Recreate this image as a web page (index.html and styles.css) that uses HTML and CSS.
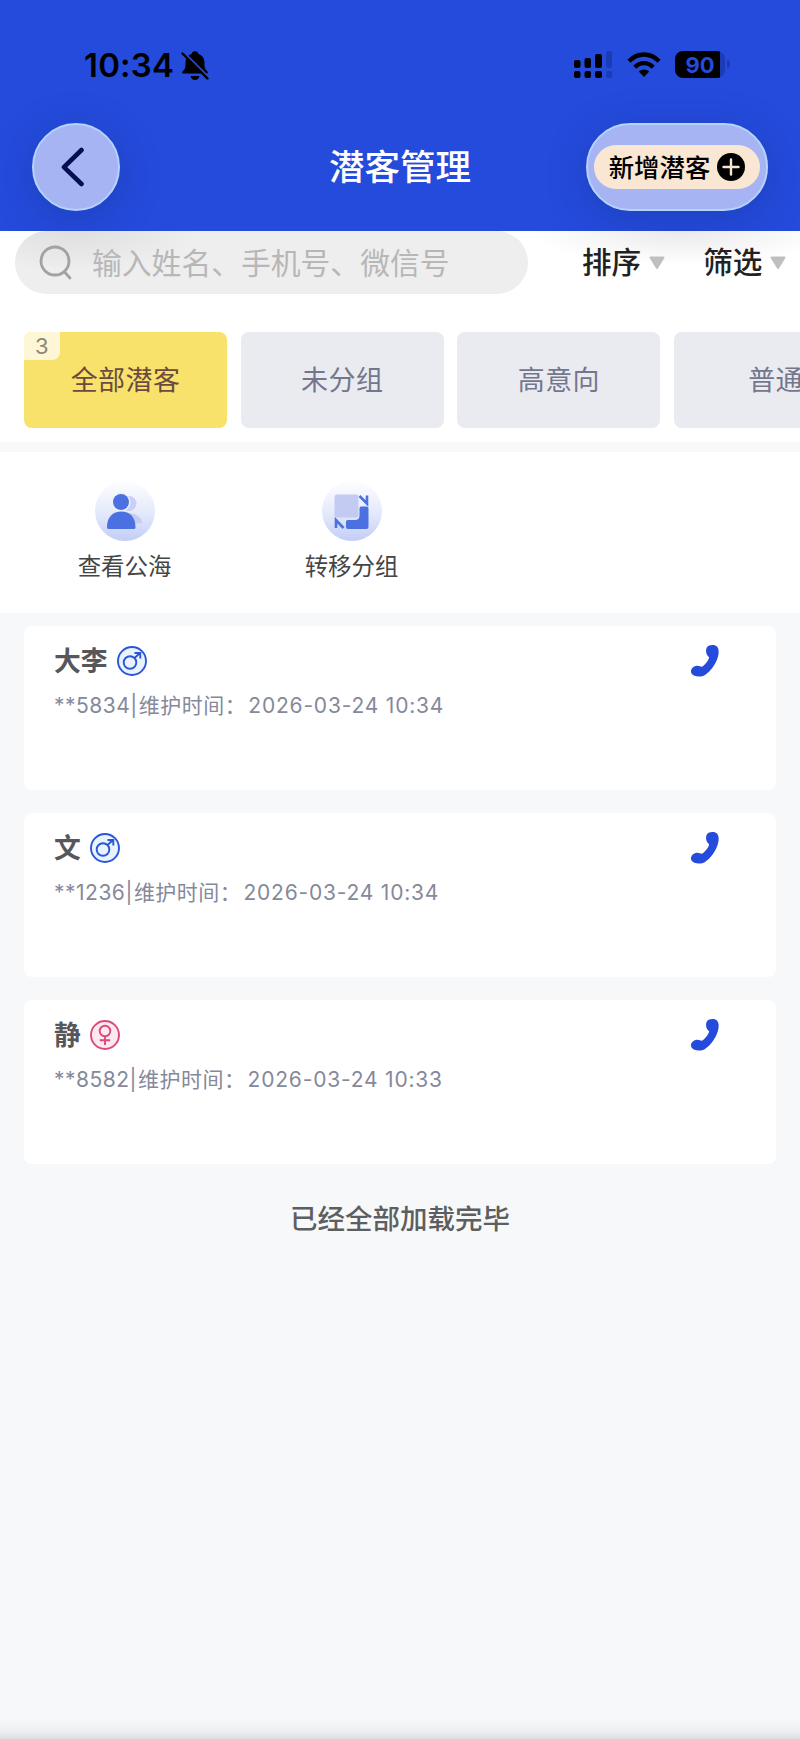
FILE: index.html
```html
<!DOCTYPE html>
<html lang="zh-CN">
<head>
<meta charset="UTF-8">
<meta name="viewport" content="width=device-width, initial-scale=1.0">
<title>潜客管理</title>
<link rel="stylesheet" href="styles.css">
</head>
<body>

<header class="header">
    <div class="status-bar">
        <div class="status-left">
            <span class="clock">10:34</span>
            <svg width="28" height="30" viewBox="0 0 28 30">
                <path d="M2 22.5c-1 0-1-1.600-.3-2.300C4 18 4.500 17 4.500 12C4.500 7 7 4 10.500 3C11 1 12.500 .3 14 .3S17 1 17.500 3C21 4 23.500 7 23.500 12c0 5 .5 6 2.800 8.200c.7.700.7 2.300-.5 2.300z"/>
                <path d="M9.500 25h9c-.5 2.500-2.200 4-4.500 4s-4-1.500-4.500-4z"/>
                <path class="bell-gap" d="M2 .5L28 26.500"/>
                <path class="bell-slash" d="M1.500 2.500L26.500 27.500"/>
            </svg>
        </div>
        <div class="status-right">
            <svg width="39" height="28" viewBox="0 0 39 28">
                <rect x="0" y="9" width="6.500" height="8" rx="2"/>
                <rect x="10.500" y="7" width="6.500" height="10" rx="2"/>
                <rect x="21" y="3" width="7" height="14" rx="2"/>
                <rect class="dim" x="32" y="0" width="6" height="17" rx="2"/>
                <rect x="0" y="20" width="6.500" height="7" rx="2"/>
                <rect x="10.500" y="20" width="6.500" height="7" rx="2"/>
                <rect x="21" y="20" width="7" height="7" rx="2"/>
                <rect class="dim" x="32" y="20" width="6" height="7" rx="2"/>
            </svg>
            <svg class="wifi" width="34" height="26" viewBox="0 0 34 26">
                <path class="wave" d="M2 9.300C10.500 .3 23.500 .3 32 9.300"/>
                <path class="wave" d="M7.800 15.200C13 9.800 21 9.800 26.200 15.200"/>
                <path d="M11.800 19.600c3-2.900 7.400-2.900 10.400 0L17 25z"/>
            </svg>
            <div class="battery"><span>90</span></div>
            <div class="battery-nub"></div>
        </div>
    </div>
    <div class="nav-bar">
        <div class="nav-side">
            <button class="back">
                <svg width="24" height="40" viewBox="0 0 24 40">
                    <path d="M20.500 3L3 20.200L20.500 37"/>
                </svg>
            </button>
        </div>
        <h1>潜客管理</h1>
        <div class="nav-side nav-right">
            <button class="add">
                <span class="add-inner">
                    <span class="add-text">新增潜客</span>
                    <svg width="28" height="28" viewBox="0 0 28 28">
                        <circle cx="14" cy="14" r="14"/>
                        <path d="M14 6.500v15M6.500 14h15"/>
                    </svg>
                </span>
            </button>
        </div>
    </div>
</header>

<section class="filters">
    <div class="search-row">
        <div class="search">
            <svg width="34" height="36" viewBox="0 0 34 36">
                <circle cx="16" cy="16" r="14"/>
                <path d="M25.500 27L31 33"/>
            </svg>
            <span>输入姓名、手机号、微信号</span>
        </div>
        <div class="dropdown"><span>排序</span>
            <svg width="16" height="14" viewBox="0 0 16 14"><path d="M1.500 1.500h13L8 12z"/></svg>
        </div>
        <div class="dropdown"><span>筛选</span>
            <svg width="16" height="14" viewBox="0 0 16 14"><path d="M1.500 1.500h13L8 12z"/></svg>
        </div>
    </div>
    <div class="tabs">
        <div class="tab active"><span class="badge">3</span>全部潜客</div>
        <div class="tab">未分组</div>
        <div class="tab">高意向</div>
        <div class="tab">普通</div>
    </div>
</section>

<section class="actions">
    <div class="action">
        <svg width="60" height="60" viewBox="0 0 60 60">
            <defs>
                <linearGradient id="disc" x1="0" y1="0" x2="0" y2="1">
                    <stop offset="0" stop-color="#fefeff"/>
                    <stop offset="0.55" stop-color="#e3e9fb"/>
                    <stop offset="1" stop-color="#c3cdf6"/>
                </linearGradient>
            </defs>
            <circle cx="30" cy="30" r="30" fill="url(#disc)"/>
            <circle cx="34" cy="22.500" r="7.500" fill="#c9d0f4"/>
            <path d="M20 45c0-9 6-13 13-13s14 4 14 10z" fill="#c3cdf0"/>
            <circle cx="26" cy="21" r="9.500" fill="#eef1fd"/>
            <circle cx="26" cy="21" r="8" fill="#4a70e2"/>
            <path d="M12 46c0-10 6-15.500 14.300-15.500S40.500 36 40.500 46.500c0 .8-.5 1.500-1.500 1.500H13.500c-1 0-1.500-.7-1.500-2z" fill="#4a70e2"/>
        </svg>
        <span>查看公海</span>
    </div>
    <div class="action">
        <svg width="60" height="60" viewBox="0 0 60 60">
            <circle cx="30" cy="30" r="30" fill="url(#disc)"/>
            <rect x="12.500" y="13.500" width="24" height="23" rx="2.500" fill="#c4cbf3"/>
            <path d="M39 25.500h5.500q2 0 2 2V46q0 2-2 2H26q-2 0-2-2v-5.500q0-1.500 2-1.500h7q4.500 0 4.500-4.500v-7q0-2 1.500-2z" fill="#4a70e2"/>
            <path d="M37.500 15l7.500 7.500V14.500M14 47v-8l7.500 8" fill="none" stroke="#4a70e2" stroke-width="2.600"/>
        </svg>
        <span>转移分组</span>
    </div>
</section>

<main class="list">
    <div class="card">
        <div class="card-top">
            <span class="name">大李</span>
            <svg class="gender male" width="30" height="30" viewBox="0 0 30 30">
                <circle class="ring" cx="15" cy="15" r="14"/>
                <circle cx="13" cy="16.500" r="6.300"/>
                <path d="M17.500 12L23 7M17.500 7H23.300V12.500"/>
            </svg>
            <svg class="phone" width="30" height="34" viewBox="0 0 30 34">
                <path d="M17 3.200C19 .6 24 .4 27 2.400C29 4.500 29 8.500 28 12.500C26 20 21 27 15 31C11 33.500 3.500 33 1.500 29.500C0 26.500 2 23 5.500 22C8.500 21 10 22.600 12 22.700C15 21 18.500 16.500 19.200 13.200C15.700 10.500 15.400 6 17 3.200z"/>
            </svg>
        </div>
        <div class="info"><span>**5834|</span><span class="label">维护时间：</span><span class="date">2026-03-24 10:34</span></div>
    </div>
    <div class="card">
        <div class="card-top">
            <span class="name">文</span>
            <svg class="gender male" width="30" height="30" viewBox="0 0 30 30">
                <circle class="ring" cx="15" cy="15" r="14"/>
                <circle cx="13" cy="16.500" r="6.300"/>
                <path d="M17.500 12L23 7M17.500 7H23.300V12.500"/>
            </svg>
            <svg class="phone" width="30" height="34" viewBox="0 0 30 34">
                <path d="M17 3.200C19 .6 24 .4 27 2.400C29 4.500 29 8.500 28 12.500C26 20 21 27 15 31C11 33.500 3.500 33 1.500 29.500C0 26.500 2 23 5.500 22C8.500 21 10 22.600 12 22.700C15 21 18.500 16.500 19.200 13.200C15.700 10.500 15.400 6 17 3.200z"/>
            </svg>
        </div>
        <div class="info"><span>**1236|</span><span class="label">维护时间：</span><span class="date">2026-03-24 10:34</span></div>
    </div>
    <div class="card">
        <div class="card-top">
            <span class="name">静</span>
            <svg class="gender female" width="30" height="30" viewBox="0 0 30 30">
                <circle class="ring" cx="15" cy="15" r="14"/>
                <circle cx="15" cy="11" r="5.300"/>
                <path d="M15 16.500V25M9.800 20.200H20.200"/>
            </svg>
            <svg class="phone" width="30" height="34" viewBox="0 0 30 34">
                <path d="M17 3.200C19 .6 24 .4 27 2.400C29 4.500 29 8.500 28 12.500C26 20 21 27 15 31C11 33.500 3.500 33 1.500 29.500C0 26.500 2 23 5.500 22C8.500 21 10 22.600 12 22.700C15 21 18.500 16.500 19.200 13.200C15.700 10.500 15.400 6 17 3.200z"/>
            </svg>
        </div>
        <div class="info"><span>**8582|</span><span class="label">维护时间：</span><span class="date">2026-03-24 10:33</span></div>
    </div>
    <p class="end">已经全部加载完毕</p>
</main>

<div class="bottom-shade"></div>

</body>
</html>
```
FILE: styles.css
```css
* {
    box-sizing: border-box;
}

body {
    margin: 0;
    height: 1739px;
    display: flex;
    flex-direction: column;
    overflow: hidden;
    background-color: #f6f8fa;
    font-family: Inter, "Noto Sans CJK SC", sans-serif;
}

svg {
    display: block;
    flex-shrink: 0;
}

button {
    border: none;
    padding: 0;
    font-family: inherit;
    cursor: pointer;
}

/* header */
.header {
    height: 231px;
    flex-shrink: 0;
    overflow: hidden;
    background-color: #244bdc;
}

.status-bar {
    height: 123px;
    padding: 51px 70px 0 84px;
    display: flex;
    justify-content: space-between;
    align-items: flex-start;
}

.status-left,
.status-right {
    display: flex;
    align-items: flex-start;
}

.clock {
    width: 97px;
    font-size: 33px;
    font-weight: 600;
    line-height: 29px;
    letter-spacing: 0.2px;
}

.bell-gap {
    stroke: #244bdc;
    stroke-width: 2;
}

.bell-slash {
    stroke: #000;
    stroke-width: 2.4;
    stroke-linecap: round;
}

.dim {
    fill: #1c3cb6;
}

.wifi {
    margin: 1px 14px 0;
}

.wave {
    fill: none;
    stroke: #000;
    stroke-width: 4.4;
}

.battery {
    width: 50px;
    height: 27px;
    border-radius: 8px;
    background: linear-gradient(to right, #000 45px, #1c3cb6 45px);
    color: #244bdc;
    font-size: 22px;
    font-weight: 700;
    line-height: 28px;
    text-align: center;
}

.battery-nub {
    width: 3px;
    height: 8px;
    margin: 9px 0 0 2px;
    border-radius: 0 4px 4px 0;
    background-color: #1c3cb6;
}

.nav-bar {
    display: flex;
    justify-content: space-between;
    align-items: center;
    padding: 0 32px;
}

.nav-side {
    width: 182px;
    display: flex;
}

.nav-right {
    justify-content: flex-end;
}

h1 {
    margin: 2px 0 0;
    color: white;
    font-size: 35.5px;
    font-weight: 500;
    line-height: 44px;
}

.back,
.add {
    display: flex;
    justify-content: center;
    align-items: center;
    height: 88px;
    border: 2px solid #b5d3fb;
    border-radius: 44px;
    background-color: #a6b4f4;
    box-shadow: 0 8px 40px rgba(20, 40, 120, 0.3);
}

.back {
    width: 88px;
    padding-right: 7px;
}

.back path {
    fill: none;
    stroke: #030f50;
    stroke-width: 4.6;
    stroke-linecap: round;
    stroke-linejoin: round;
}

.add {
    width: 182px;
}

.add-inner {
    display: flex;
    justify-content: center;
    align-items: center;
    gap: 7px;
    width: 166px;
    height: 44px;
    border-radius: 22px;
    background-color: #fae7d3;
    color: #000;
    font-size: 25.4px;
    font-weight: 500;
}

.add-text {
    margin-bottom: 2px;
}

.add path {
    stroke: #fae7d3;
    stroke-width: 2.4;
    stroke-linecap: round;
}

/* search and groups */
.filters {
    height: 211px;
    flex-shrink: 0;
    overflow: hidden;
    background: radial-gradient(ellipse 150px 34px at 680px 0, #eaeaea, rgba(255, 255, 255, 0)), #fff;
}

.search-row {
    display: flex;
    align-items: center;
    height: 63px;
    padding-left: 15px;
}

.search {
    display: flex;
    align-items: center;
    gap: 19px;
    width: 513px;
    height: 63px;
    padding-left: 24px;
    border-radius: 32px;
    background: radial-gradient(ellipse 120px 40px at 60px 0, #dfdfdf, rgba(238, 238, 238, 0)), #eee;
    color: #b7b7b7;
    font-size: 29.8px;
    white-space: nowrap;
}

.search span,
.dropdown span {
    margin-bottom: 4px;
}

.search circle,
.search path {
    fill: none;
    stroke: #a2a2a2;
    stroke-width: 2.8;
    stroke-linecap: round;
}

.dropdown {
    display: flex;
    align-items: center;
    gap: 8px;
    margin-left: 54px;
    color: #222;
    font-size: 29.6px;
    font-weight: 500;
}

.dropdown + .dropdown {
    margin-left: 38px;
}

.dropdown path {
    fill: #bfbfbf;
    stroke: #bfbfbf;
    stroke-width: 2;
    stroke-linejoin: round;
}

.tabs {
    display: flex;
    gap: 13.7px;
    margin-top: 38px;
    padding-left: 24px;
}

.tab {
    position: relative;
    display: flex;
    flex-shrink: 0;
    justify-content: center;
    align-items: center;
    width: 203px;
    height: 96px;
    padding-bottom: 3px;
    border-radius: 8px;
    background-color: #eaebf1;
    color: #74768c;
    font-size: 27px;
    letter-spacing: 0.4px;
}

.tab.active {
    background-color: #f8e26b;
    color: #6b4a3f;
}

.badge {
    position: absolute;
    top: 0;
    left: 0;
    width: 36px;
    height: 28px;
    border-radius: 8px 0 8px 0;
    background-color: #fdf6d7;
    color: #8e8878;
    font-size: 22px;
    line-height: 28px;
    text-align: center;
}

/* quick actions */
.actions {
    display: flex;
    flex-shrink: 0;
    height: 161px;
    margin-top: 10px;
    padding: 29px 0 0 11px;
    background-color: white;
}

.action {
    display: flex;
    flex-direction: column;
    align-items: center;
    width: 227px;
    gap: 9px;
    color: #454545;
    font-size: 23.4px;
    line-height: 34px;
}

/* customers */
.list {
    display: flex;
    flex-direction: column;
    gap: 23.5px;
    padding: 13px 24px 0;
}

.card {
    height: 163.5px;
    padding: 17px 56px 0 30px;
    border-radius: 8px;
    background-color: white;
}

.card-top {
    display: flex;
    align-items: center;
    height: 36px;
}

.name {
    margin-bottom: 3px;
    color: #56565b;
    font-size: 26.8px;
    font-weight: 700;
}

.gender {
    margin-left: 9px;
    fill: none;
    stroke-width: 1.9;
}

.male {
    stroke: #2c55d8;
}

.male .ring {
    fill: #e8f3fe;
}

.female {
    stroke: #dd4a78;
}

.female .ring {
    fill: #fdeaf0;
}

.phone {
    margin-left: auto;
    fill: #244bdc;
}

.info {
    display: flex;
    align-items: center;
    height: 30px;
    margin-top: 11px;
    color: #85899a;
    font-size: 21px;
    letter-spacing: 0.5px;
    white-space: nowrap;
}

.label {
    margin: 0 2px 2px 1px;
}

.date {
    letter-spacing: 0.8px;
}

.end {
    margin: 12px 0 0;
    color: #5d5e60;
    font-size: 27.5px;
    font-weight: 500;
    line-height: 40px;
    text-align: center;
}

.bottom-shade {
    height: 20px;
    margin-top: auto;
    background: linear-gradient(to bottom, #f6f8fa, #eeeff1 60%, #dcdddf);
}
```
